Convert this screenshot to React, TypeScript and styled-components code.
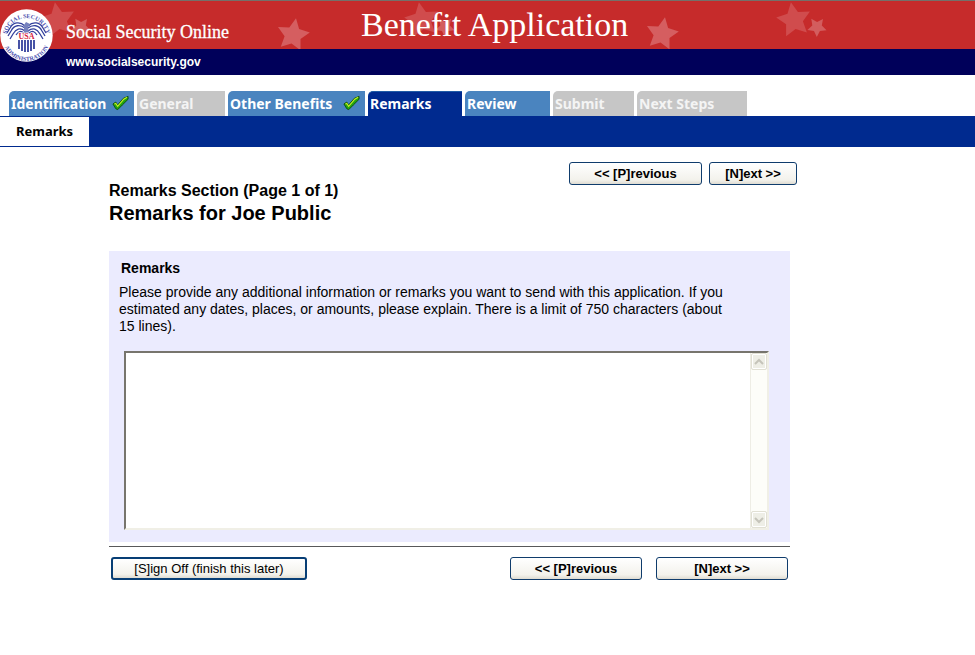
import React from "react";
import styled, { createGlobalStyle, css } from "styled-components";

const GlobalStyle = createGlobalStyle`
  *, *::before, *::after { box-sizing: border-box; }
  body {
    margin: 0;
    background: #fff;
    color: #000;
    font-family: "Liberation Sans", Arial, sans-serif;
    font-size: 14px;
  }
  h1, h2, p { margin: 0; }
`;

const Banner = styled.header`
  position: relative;
  border-top: 1px solid #74706a;
  background: #00005a;
`;

const RedBand = styled.div`
  position: relative;
  display: grid;
  grid-template-columns: 296px 1fr;
  height: 48px;
  overflow: hidden;
  background: #c62b2b;
  color: #fff;
`;

const Stars = styled.svg`
  position: absolute;
  top: 0;
  left: 0;
  width: 840px;
  height: 48px;
`;

const SiteName = styled.a`
  position: relative;
  padding: 20px 0 0 66px;
  color: #fff;
  font: 18px/22px "Liberation Serif", "Times New Roman", serif;
  -webkit-text-stroke: 0.3px #fff;
  text-decoration: none;
  white-space: nowrap;
`;

const AppTitle = styled.h1`
  position: relative;
  padding: 4px 0 0 65px;
  font: 34px/40px "Liberation Serif", "Times New Roman", serif;
  white-space: nowrap;
`;

const NavyBand = styled.div`
  height: 26px;
  padding: 4px 0 0 66px;
`;

const SiteUrl = styled.a`
  color: #fff;
  font-size: 12px;
  font-weight: bold;
  line-height: 18px;
  text-decoration: none;
`;

const SealDrawing = styled.svg`
  position: absolute;
  top: 8px;
  left: 0;
  width: 53px;
  height: 53px;
`;

const Tabs = styled.nav`
  display: grid;
  grid-template-columns: 125px 88px 137px 94px 85px 81px 110px;
  gap: 3px;
  padding: 16px 0 0 9px;
`;

type TabState = "open" | "current" | "locked";

const tabColour: Record<TabState, string> = {
  open: "#4a84bf",
  current: "#002a8f",
  locked: "#c6c6c6",
};

const Tab = styled.a<{ $state: TabState }>`
  display: flex;
  align-items: center;
  justify-content: space-between;
  height: 25px;
  padding: 0 5px 0 2px;
  border-top-left-radius: 5px;
  background: ${({ $state }) => tabColour[$state]};
  color: ${({ $state }) => ($state === "locked" ? "#f4f4f4" : "#fff")};
  font: bold 14px/24px "Noto Sans", "Liberation Sans", sans-serif;
  text-decoration: none;
  white-space: nowrap;
  ${({ $state }) => $state === "current" && css`border-top: 1px solid #1f5ba6;`}
`;

const SubBar = styled.nav`
  display: flex;
  height: 31px;
  padding: 1px 0;
  background: #002a8f;
`;

const SubTab = styled.a`
  padding: 0 16px;
  background: #fff;
  color: #000;
  font: bold 13px/28px "Noto Sans", sans-serif;
  text-decoration: none;
`;

const Content = styled.main`
  max-width: 797px;
  padding: 15px 7px 24px 109px;
`;

const Intro = styled.div`
  display: flex;
  justify-content: space-between;
  margin-right: -7px;
  height: 89px;
`;

const Heading = styled.div`
  padding-top: 19px;
`;

const SectionLabel = styled.p`
  font-size: 16px;
  font-weight: bold;
  line-height: 20px;
`;

const PageHeading = styled.h2`
  font-size: 20px;
  line-height: 24px;
`;

const ButtonGroup = styled.div<{ $gap: number }>`
  display: flex;
  align-items: flex-start;
  gap: ${({ $gap }) => $gap}px;
`;

const Button = styled.button<{ $width: number; $primary?: boolean }>`
  width: ${({ $width }) => $width}px;
  height: 23px;
  padding: 0;
  border: 1px solid #0f3c6c;
  border-radius: 3px;
  background: linear-gradient(#fff, #f3f2ec 80%, #dfdcd2);
  color: #000;
  font: bold 13px/19px "Liberation Sans", Arial, sans-serif;
  ${({ $primary }) =>
    $primary &&
    css`
      border-width: 2px;
      border-color: #073e75;
      font-weight: normal;
      line-height: 18px;
    `}
`;

const Panel = styled.section`
  padding: 8px 21px 12px 10px;
  background: #ebebfe;
`;

const PanelLabel = styled.label`
  display: block;
  padding-left: 2px;
  font-size: 14px;
  font-weight: bold;
  line-height: 18px;
`;

const Instructions = styled.p`
  max-width: 620px;
  padding-top: 7px;
  font-size: 14px;
  line-height: 17px;
`;

const FieldFrame = styled.div`
  display: flex;
  height: 179px;
  margin: 16px 0 0 5px;
  border: 2px solid #f0efe6;
  border-top-color: #77756d;
  border-left-color: #77756d;
  background: #fff;
`;

const RemarksField = styled.textarea`
  flex: 1;
  min-width: 0;
  padding: 4px;
  border: 0;
  outline: 0;
  resize: none;
  background: #fff;
  font: 14px/17px "Liberation Sans", Arial, sans-serif;
`;

const ScrollTrack = styled.div`
  display: flex;
  flex-direction: column;
  justify-content: space-between;
  width: 17px;
  border-left: 1px solid #eeede5;
  background: #fdfdf9;
`;

const ScrollButton = styled.button`
  display: grid;
  place-items: center;
  width: 16px;
  height: 17px;
  padding: 0;
  border: 1px solid #e1e0d4;
  border-radius: 2px;
  background: #eeeee6;
  box-shadow: inset 0 0 0 1px #fff;
`;

const Actions = styled.div`
  display: flex;
  justify-content: space-between;
  margin-top: 4px;
  padding: 10px 2px 0;
  border-top: 1px solid #58585a;
`;

type StarProps = { cx: number; cy: number; r: number; turn: number; fill: string };

function Star({ cx, cy, r, turn, fill }: StarProps) {
  const points = Array.from({ length: 10 }, (_, i) => {
    const radius = i % 2 ? r * 0.5 : r;
    const angle = ((i * 36 - 90 + turn) * Math.PI) / 180;
    return `${(cx + radius * Math.cos(angle)).toFixed(1)},${(cy + radius * Math.sin(angle)).toFixed(1)}`;
  }).join(" ");
  return <polygon points={points} fill={fill} />;
}

function BannerStars() {
  return (
    <Stars viewBox="0 0 840 48" aria-hidden="true">
      {[58, 422, 794].map((x) => (
        <g key={x}>
          <Star cx={x} cy={19} r={18} turn={-10} fill="#d04c4d" />
          <Star cx={x + 23} cy={26} r={10} turn={-35} fill="#d35d5e" />
        </g>
      ))}
      <Star cx={293} cy={34} r={17} turn={10} fill="#d55e60" />
      <Star cx={662} cy={33} r={17} turn={10} fill="#d55e60" />
    </Stars>
  );
}

function Seal() {
  return (
    <SealDrawing viewBox="0 0 53 53" role="img" aria-label="Social Security Administration seal">
      <defs>
        <path id="sealTop" d="M6.5 34A20.5 20.5 0 1 1 46.5 34" />
        <path id="sealBottom" d="M2.5 28A24 24 0 0 0 50.5 28" />
      </defs>
      <circle cx="26.5" cy="26.5" r="26.2" fill="#fff" />
      <g fill="#4a4fae" fontFamily="Liberation Serif, serif" fontSize="6" fontWeight="bold">
        <text textAnchor="middle"><textPath href="#sealTop" startOffset="50%">SOCIAL SECURITY</textPath></text>
        <text textAnchor="middle"><textPath href="#sealBottom" startOffset="50%">ADMINISTRATION</textPath></text>
      </g>
      <g fill="none" stroke="#34419d" strokeWidth="1.3">
        <path d="M25 17C20 12 13 13 10 19L7 24M28 17C33 12 40 13 43 19L46 24" />
        <path d="M25 19C20 15 14 16 11 22L8 27M28 19C33 15 39 16 42 22L45 27" />
        <path d="M25 22C20 18 16 20 13 25L10 30M28 22C33 18 37 20 40 25L43 30" />
        <path d="M24 24C20 21 18 23 16 26M29 24C33 21 35 23 37 26" />
      </g>
      <path d="M24 16L26 13L30 15L28 18L29 24H24Z" fill="#7681bd" />
      <path d="M18 30H35V38Q34 42 26.5 43Q19 42 18 38Z" fill="#fff" />
      <path d="M19 31V40M22 31V42M25 31V43M28 31V43M31 31V42M34 31V40" stroke="#34419d" strokeWidth="1.8" />
      <text x="26.5" y="30" textAnchor="middle" fill="#d81e42" stroke="#fff" strokeWidth="1.2" paintOrder="stroke" fontFamily="Liberation Serif, serif" fontSize="8" fontWeight="bold">USA</text>
    </SealDrawing>
  );
}

function Check() {
  return (
    <svg width="17" height="17" viewBox="0 0 18 17" role="img" aria-label="Complete">
      <path d="M1 9L4 7L6 10L12 3L17 1V4L11 10L6 15L4 14Z" fill="#20a510" stroke="#10500c" strokeWidth="1" />
      <path d="M2.5 9L4 8.5L6 11.5L12.5 4L16 2" fill="none" stroke="#c8ef22" strokeWidth="1.2" />
    </svg>
  );
}

const tabs: { label: string; state: TabState; done?: boolean }[] = [
  { label: "Identification", state: "open", done: true },
  { label: "General", state: "locked" },
  { label: "Other Benefits", state: "open", done: true },
  { label: "Remarks", state: "current" },
  { label: "Review", state: "open" },
  { label: "Submit", state: "locked" },
  { label: "Next Steps", state: "locked" },
];

function ScrollArrow({ up }: { up?: boolean }) {
  return (
    <ScrollButton type="button" disabled aria-label={up ? "Scroll up" : "Scroll down"}>
      <svg width="10" height="8" viewBox="0 0 10 8">
        <path d={up ? "M1 6L5 2L9 6" : "M1 2L5 6L9 2"} fill="none" stroke="#c5c4ba" strokeWidth="2" />
      </svg>
    </ScrollButton>
  );
}

export default function App() {
  return (
    <>
      <GlobalStyle />
      <Banner>
        <RedBand>
          <BannerStars />
          <SiteName href="#home">Social Security Online</SiteName>
          <AppTitle>Benefit Application</AppTitle>
        </RedBand>
        <NavyBand>
          <SiteUrl href="#home">www.socialsecurity.gov</SiteUrl>
        </NavyBand>
        <Seal />
      </Banner>
      <Tabs aria-label="Application sections">
        {tabs.map(({ label, state, done }) => (
          <Tab key={label} href="#section" $state={state} aria-current={state === "current" ? "step" : undefined}>
            {label}
            {done && <Check />}
          </Tab>
        ))}
      </Tabs>
      <SubBar aria-label="Section pages">
        <SubTab href="#remarks">Remarks</SubTab>
      </SubBar>
      <Content>
        <Intro>
          <Heading>
            <SectionLabel>Remarks Section (Page 1 of 1)</SectionLabel>
            <PageHeading>Remarks for Joe Public</PageHeading>
          </Heading>
          <ButtonGroup $gap={7}>
            <Button type="button" $width={133}>&lt;&lt; [P]revious</Button>
            <Button type="button" $width={88}>[N]ext &gt;&gt;</Button>
          </ButtonGroup>
        </Intro>
        <Panel>
          <PanelLabel htmlFor="remarks">Remarks</PanelLabel>
          <Instructions id="remarks-help">
            Please provide any additional information or remarks you want to send with this application. If you
            estimated any dates, places, or amounts, please explain. There is a limit of 750 characters (about 15
            lines).
          </Instructions>
          <FieldFrame>
            <RemarksField id="remarks" maxLength={750} aria-describedby="remarks-help" />
            <ScrollTrack>
              <ScrollArrow up />
              <ScrollArrow />
            </ScrollTrack>
          </FieldFrame>
        </Panel>
        <Actions>
          <Button type="button" $width={196} $primary>[S]ign Off (finish this later)</Button>
          <ButtonGroup $gap={14}>
            <Button type="button" $width={132}>&lt;&lt; [P]revious</Button>
            <Button type="button" $width={132}>[N]ext &gt;&gt;</Button>
          </ButtonGroup>
        </Actions>
      </Content>
    </>
  );
}
